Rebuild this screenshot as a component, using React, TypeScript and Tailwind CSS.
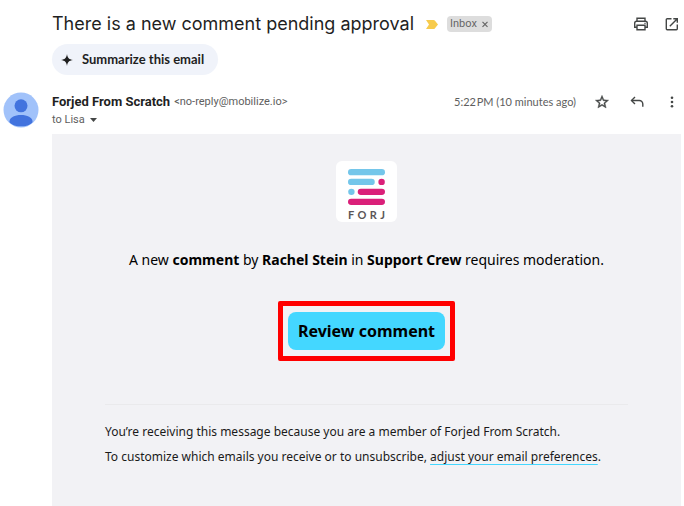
import React from 'react';

const PrintIcon = () => (
  <svg className="w-4 h-4" viewBox="0 0 16 16" fill="none" stroke="#444746" strokeWidth="1.4">
    <path d="M4 5V2.2h8V5" />
    <path d="M4 11.3H1.7V7.2c0-1.2.8-2 2-2h8.6c1.2 0 2 .8 2 2v4.1H12" />
    <path d="M4 9.3h8v4.5H4z" />
    <path d="M11.4 7.3h1.2" strokeWidth="1.2" />
  </svg>
);

const OpenIcon = () => (
  <svg className="w-4 h-4" viewBox="0 0 16 16" fill="none" stroke="#444746" strokeWidth="1.4">
    <path d="M7.5 2.7H3.2c-.5 0-.9.4-.9.9v9.2c0 .5.4.9.9.9h9.2c.5 0 .9-.4.9-.9V8.5" />
    <path d="M9.3 2.7h4v4M13.3 2.7 5.8 10.2" />
  </svg>
);

const StarIcon = () => (
  <svg className="w-4 h-4" viewBox="0 0 24 24" fill="#444746" stroke="#444746" strokeWidth="0.6">
    <path d="M22 9.24l-7.19-.62L12 2 9.19 8.63 2 9.24l5.46 4.73L5.82 21 12 17.27 18.18 21l-1.63-7.03L22 9.24zM12 15.4l-3.76 2.27 1-4.28-3.32-2.88 4.38-.38L12 6.1l1.71 4.04 4.38.38-3.32 2.88 1 4.28L12 15.4z" />
  </svg>
);

const ReplyIcon = () => (
  <svg className="w-4 h-4" viewBox="0 0 16 16" fill="none" stroke="#444746" strokeWidth="1.4">
    <path d="M6 3 2.5 6.5 6 10" />
    <path d="M2.5 6.5h7.7c2.1 0 3.6 1.5 3.6 3.6v2.6" />
  </svg>
);

const MoreIcon = () => (
  <svg className="w-4 h-4" viewBox="0 0 16 16" fill="#444746">
    <circle cx="8" cy="3.7" r="1.3" />
    <circle cx="8" cy="8" r="1.3" />
    <circle cx="8" cy="12.3" r="1.3" />
  </svg>
);

const Avatar = () => (
  <svg className="w-9 h-9 shrink-0" viewBox="0 0 36 36">
    <defs>
      <clipPath id="avatar-clip">
        <circle cx="18" cy="18" r="17.5" />
      </clipPath>
    </defs>
    <circle cx="18" cy="18" r="17.5" fill="#a1c2fa" />
    <g clipPath="url(#avatar-clip)" fill="#4273de">
      <circle cx="18" cy="13.8" r="6.5" />
      <path d="M6.5 29.5c0-4.2 5.2-6.6 11.5-6.6s11.5 2.4 11.5 6.6c0 2.4-5 4.8-11.5 4.8s-11.5-2.4-11.5-4.8z" />
    </g>
  </svg>
);

const ForjLogo = () => (
  <div className="w-[61px] h-[61px] rounded-md bg-white px-3 pt-[7px]">
    <svg className="w-full h-[38px]" viewBox="0 0 38 38">
      <g fill="#74c6ea">
        <rect x="0" y="0.5" width="38" height="6.5" rx="3.25" />
        <rect x="0" y="10.5" width="27.5" height="6.5" rx="3.25" />
        <circle cx="3.5" cy="24" r="3.3" />
      </g>
      <g fill="#da2079">
        <circle cx="34.5" cy="13.75" r="3.3" />
        <rect x="10" y="20.7" width="28" height="6.5" rx="3.25" />
        <rect x="0" y="31" width="38" height="6.5" rx="3.25" />
      </g>
    </svg>
    <div className="flex justify-between pt-[3px] text-[11px] leading-[12px] font-bold text-[#5b5657] font-['Lato',sans-serif]">
      <span>F</span>
      <span>O</span>
      <span>R</span>
      <span>J</span>
    </div>
  </div>
);

export default function App() {
  return (
    <div className="min-h-screen flex flex-col bg-white pr-[3px] text-[#1f1f1f] font-['Roboto',sans-serif]">
      <header className="pl-[52px] pr-px pt-2">
        <div className="flex items-center h-8">
          <h1 className="text-lg leading-8 whitespace-nowrap font-['Inter',sans-serif]">There is a new comment pending approval</h1>
          <svg className="w-3 h-[9px] ml-3 shrink-0" viewBox="0 0 12 9" fill="#f7cb4d">
            <path d="M0 0h7.5c.6 0 1 .2 1.3.6L12 4.5 8.8 8.4c-.3.4-.7.6-1.3.6H0l3-4.5z" />
          </svg>
          <span className="flex items-center gap-1 ml-[9px] h-4 rounded bg-[#dddddd] px-[3px] text-[11px] text-[#666666]">
            Inbox
            <button aria-label="Remove label Inbox" className="flex">
              <svg className="w-2 h-2" viewBox="0 0 8 8" stroke="#666" strokeWidth="1.2">
                <path d="M1.5 1.8l5 5M6.5 1.8l-5 5" />
              </svg>
            </button>
          </span>
          <div className="flex gap-[15px] ml-auto">
            <button aria-label="Print all"><PrintIcon /></button>
            <button aria-label="In new window"><OpenIcon /></button>
          </div>
        </div>
        <button className="flex items-center gap-2 mt-1 h-[31px] rounded-full bg-[#f0f3fa] pl-2 pr-[14px] text-[13px] font-bold font-['Lato',sans-serif]">
          <svg className="w-[14px] h-[14px]" viewBox="0 0 14 14" fill="#1f1f1f">
            <path d="M7 1C7.6 5 9 6.4 13 7 9 7.6 7.6 9 7 13 6.4 9 5 7.6 1 7 5 6.4 6.4 5 7 1z" />
          </svg>
          Summarize this email
        </button>
      </header>

      <section className="flex items-center gap-[13px] pl-[3px] pr-px mt-4 h-[38px]">
        <Avatar />
        <div className="flex-1 min-w-0">
          <div className="flex items-center h-5">
            <span className="text-[13px] font-bold">Forjed From Scratch</span>
            <span className="ml-1 text-[11px] text-[#5e5e5e]">&lt;no-reply@mobilize.io&gt;</span>
            <span className="ml-auto text-[11px] text-[#5e5e5e] font-['Lato',sans-serif]">5:22{'\u200a'}PM (10 minutes ago)</span>
            <div className="flex gap-[19px] ml-[18px]">
              <button aria-label="Star"><StarIcon /></button>
              <button aria-label="Reply"><ReplyIcon /></button>
              <button aria-label="More"><MoreIcon /></button>
            </div>
          </div>
          <button className="flex items-center gap-[5px] h-4 text-[11px] text-[#5e5e5e]">
            to Lisa
            <svg className="w-[7px] h-1" viewBox="0 0 7 4" fill="#444746">
              <path d="M0 0h7L3.5 4z" />
            </svg>
          </button>
        </div>
      </section>

      <main className="flex-1 ml-[52px] mt-[5px] flex flex-col items-center bg-[#f2f2f5] px-[53px] pt-[27px] text-black font-['Noto_Sans',sans-serif]">
        <ForjLogo />
        <p className="mt-[27px] text-[14px] leading-[22px] whitespace-nowrap">
          A new <b>comment</b> by <b>Rachel Stein</b> in <b>Support Crew</b> requires moderation.
        </p>
        <div className="mt-[30px] rounded-xs border-5 border-[#ff0000] px-[5px] py-[6px]">
          <button className="block h-[38px] rounded-lg bg-[#44d7ff] px-[10px] text-[16px] font-bold whitespace-nowrap">
            Review comment
          </button>
        </div>
        <footer className="self-stretch mt-[43px] border-t border-[#eaeaec] pt-[14px] text-[12px] leading-[25px] text-[#1a1a1a]">
          <p>You’re receiving this message because you are a member of Forjed From Scratch.</p>
          <p>
            To customize which emails you receive or to unsubscribe,{' '}
            <a href="#preferences" className="underline decoration-[#44d7ff] underline-offset-3">adjust your email preferences</a>.
          </p>
        </footer>
      </main>
    </div>
  );
}
